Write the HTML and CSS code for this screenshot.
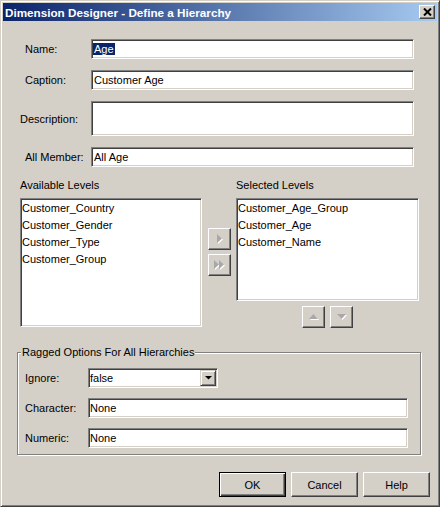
FILE: index.html
```html
<!DOCTYPE html>
<html>
<head>
<meta charset="utf-8">
<title>Dimension Designer - Define a Hierarchy</title>
<link rel="stylesheet" href="styles.css">
</head>
<body>
<div class="window">
  <div class="titlebar">
    <span class="title">Dimension Designer - Define a Hierarchy</span>
    <span class="close"><svg width="9" height="8" viewBox="0 0 9 8"><path d="M1 0.5 L8 7.5 M8 0.5 L1 7.5" stroke="#000" stroke-width="2" fill="none"/></svg></span>
  </div>
  <div class="body">
    <div class="form">
      <label class="lbl">Name:</label>
      <div class="field"><span class="sel">Age</span></div>
      <label class="lbl">Caption:</label>
      <div class="field">Customer Age</div>
      <label class="lbl lbl-desc">Description:</label>
      <div class="field field-tall"></div>
      <label class="lbl">All Member:</label>
      <div class="field">All Age</div>
    </div>

    <div class="levels">
      <div class="col col-avail">
        <div class="cap">Available Levels</div>
        <div class="list list-avail">
          <div class="item">Customer_Country</div>
          <div class="item">Customer_Gender</div>
          <div class="item">Customer_Type</div>
          <div class="item">Customer_Group</div>
        </div>
      </div>
      <div class="movers">
        <button class="raised sq"><svg width="11" height="12" viewBox="0 0 11 12"><polygon points="4,2 9,6.5 4,11" fill="#fff"/><polygon points="3,1 8,5.5 3,10" fill="#a8a8a8"/></svg></button>
        <button class="raised sq"><svg width="15" height="12" viewBox="0 0 15 12"><polygon points="3,2 8,6.5 3,11" fill="#fff"/><polygon points="8,2 13,6.5 8,11" fill="#fff"/><polygon points="2,1 7,5.5 2,10" fill="#a8a8a8"/><polygon points="7,1 12,5.5 7,10" fill="#a8a8a8"/></svg></button>
      </div>
      <div class="col col-sel">
        <div class="cap">Selected Levels</div>
        <div class="list list-sel">
          <div class="item">Customer_Age_Group</div>
          <div class="item">Customer_Age</div>
          <div class="item">Customer_Name</div>
        </div>
        <div class="order">
          <button class="raised sq"><svg width="12" height="9" viewBox="0 0 12 9"><polygon points="2,7 6.5,2 11,7" fill="#fff"/><polygon points="1,6 5.5,1 10,6" fill="#a8a8a8"/></svg></button>
          <button class="raised sq"><svg width="12" height="9" viewBox="0 0 12 9"><polygon points="2,2 11,2 6.5,7" fill="#fff"/><polygon points="1,1 10,1 5.5,6" fill="#a8a8a8"/></svg></button>
        </div>
      </div>
    </div>

    <div class="group">
      <div class="group-title">Ragged Options For All Hierarchies</div>
      <div class="group-grid">
        <span class="glbl">Ignore:</span>
        <div class="combo">
          <span class="combo-val">false</span>
          <span class="combo-btn"><svg width="7" height="4" viewBox="0 0 7 4"><polygon points="0,0 7,0 3.5,3.5" fill="#000"/></svg></span>
        </div>
        <span class="glbl">Character:</span>
        <div class="field tight">None</div>
        <span class="glbl">Numeric:</span>
        <div class="field tight">None</div>
      </div>
    </div>

    <div class="actions">
      <button class="pbtn default">OK</button>
      <button class="pbtn">Cancel</button>
      <button class="pbtn">Help</button>
    </div>
  </div>
</div>
</body>
</html>
```

FILE: styles.css
```css
* { box-sizing: border-box; }
html, body { margin: 0; padding: 0; }
body {
  width: 440px;
  height: 507px;
  background: #d4d0c8;
  font-family: "Liberation Sans", Arial, sans-serif;
  font-size: 11px;
  color: #000;
}
.window {
  width: 440px;
  height: 507px;
  border: 1px solid;
  border-color: #d4d0c8 #404040 #404040 #d4d0c8;
  box-shadow: inset 1px 1px #fff, inset -1px -1px #808080;
  padding: 2px;
  background: #d4d0c8;
}
.titlebar {
  height: 18px;
  display: flex;
  align-items: center;
  justify-content: space-between;
  background: linear-gradient(to right, #0a246a, #a6caf0);
  padding-left: 2px;
}
.title {
  color: #fff;
  font-weight: bold;
  font-size: 11.7px;
}
.close {
  width: 16px;
  height: 14px;
  margin-right: 2px;
  background: #d4d0c8;
  border: 1px solid;
  border-color: #fff #404040 #404040 #fff;
  box-shadow: inset -1px -1px #808080;
  display: flex;
  align-items: center;
  justify-content: center;
}
.body {
  padding: 18px 7px 0 14px;
  display: flex;
  flex-direction: column;
}
.form {
  margin: 0 16px 0 3px;
  display: grid;
  grid-template-columns: 71px 1fr;
  row-gap: 11px;
  align-items: center;
}
.lbl { padding-left: 5px; }
.lbl-desc { padding-left: 0; }
.field {
  height: 20px;
  background: #fff;
  border: 1px solid;
  border-color: #808080 #fff #fff #808080;
  box-shadow: inset 1px 1px #404040, inset -1px -1px #d4d0c8;
  padding: 0 2px;
  line-height: 18px;
  white-space: nowrap;
}
.field-tall { height: 35px; }
.field.tight { padding-left: 1px; }
.sel {
  background: #0a246a;
  color: #fff;
  padding: 0 1px;
  margin-left: -1px;
}
.levels {
  margin: 12px 11px 0 3px;
  display: flex;
  align-items: flex-start;
}
.col-avail { width: 182px; }
.col-sel { width: 183px; }
.cap {
  height: 13px;
  line-height: 13px;
  margin-bottom: 6px;
}
.list {
  background: #fff;
  border: 1px solid;
  border-color: #808080 #fff #fff #808080;
  box-shadow: inset 1px 1px #404040, inset -1px -1px #d4d0c8;
  padding: 1px;
}
.item {
  line-height: 17px;
  height: 17px;
  white-space: nowrap;
}
.list-avail { height: 129px; }
.list-sel { height: 103px; }
.movers {
  width: 34px;
  padding: 49px 0 0 6px;
  display: flex;
  flex-direction: column;
  gap: 4px;
}
.raised {
  background: #d4d0c8;
  border: 1px solid;
  border-color: #fff #404040 #404040 #fff;
  box-shadow: inset -1px -1px #808080;
  padding: 0;
  margin: 0;
  display: flex;
  align-items: center;
  justify-content: center;
  font: inherit;
  color: inherit;
}
.sq { width: 23px; height: 22px; }
.order {
  margin-top: 5px;
  display: flex;
  justify-content: center;
  gap: 5px;
}
.group {
  margin: 24px 9px 0 0;
  border: 1px solid #808080;
  box-shadow: inset 1px 1px #fff, 1px 1px #fff;
  padding: 0 12px 6px 7px;
}
.group-title {
  margin: -7px 0 0 -4px;
  width: fit-content;
  padding: 0 1px;
  background: #d4d0c8;
  line-height: 13px;
  height: 13px;
}
.group-grid {
  margin-top: 9px;
  display: grid;
  grid-template-columns: 63px 1fr;
  row-gap: 10px;
  align-items: center;
}
.combo {
  width: 130px;
  height: 20px;
  display: flex;
  background: #fff;
  border: 1px solid;
  border-color: #808080 #fff #fff #808080;
  box-shadow: inset 1px 1px #404040, inset -1px -1px #d4d0c8;
  padding: 1px;
}
.combo-val {
  flex: 1;
  line-height: 16px;
}
.combo-btn {
  width: 16px;
  height: 16px;
  background: #d4d0c8;
  border: 1px solid;
  border-color: #d4d0c8 #404040 #404040 #d4d0c8;
  box-shadow: inset 1px 1px #fff, inset -1px -1px #808080;
  display: flex;
  align-items: center;
  justify-content: center;
}
.actions {
  margin-top: 17px;
  display: flex;
  justify-content: flex-end;
  gap: 5px;
}
.pbtn {
  width: 67px;
  height: 25px;
  background: #d4d0c8;
  border: 1px solid;
  border-color: #fff #404040 #404040 #fff;
  box-shadow: inset -1px -1px #808080;
  padding: 0;
  margin: 0;
  font: inherit;
  color: #000;
}
.pbtn.default {
  border: 1px solid #000;
  box-shadow: inset 1px 1px #fff, inset -1px -1px #404040, inset -2px -2px #808080;
}
```
